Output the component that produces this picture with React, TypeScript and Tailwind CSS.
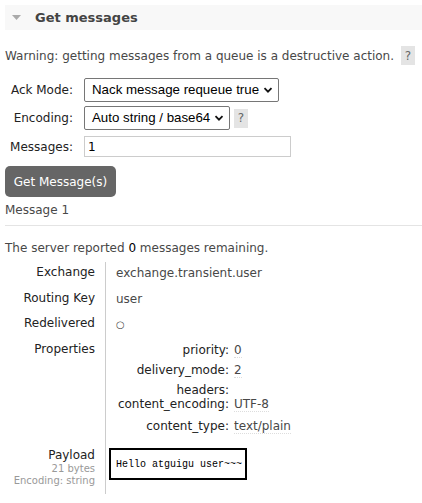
import React from 'react';

const font = { fontFamily: '"DejaVu Sans", Verdana, sans-serif' };

const props: [string, string][] = [
  ['priority:', '0'],
  ['delivery_mode:', '2'],
];

function Help() {
  return (
    <span className="inline-flex items-center justify-center w-[14px] h-[19px] bg-[#e4e4e4] text-[#666] text-[12px]">?</span>
  );
}

function Chevron() {
  return (
    <svg width="10" height="10" viewBox="0 0 10 10" className="absolute right-[5px] top-1/2 -translate-y-1/2 pointer-events-none">
      <path d="M1.5 3.2 L5 6.7 L8.5 3.2" fill="none" stroke="#111" strokeWidth="1.8" />
    </svg>
  );
}

export default function App() {
  return (
    <div className="w-[422px] h-[503px] bg-white text-[12px] text-[#484848] overflow-hidden" style={font}>
      {/* Section header */}
      <div className="mt-[5px] ml-[5px] h-[25px] bg-[#f8f8f8] flex items-center">
        <svg width="10" height="8" viewBox="0 0 10 8" className="ml-[7px]">
          <path d="M0 1 L9 1 L4.5 6 Z" fill="#aaa" />
        </svg>
        <span className="ml-[13px] text-[13px] font-bold text-[#444]">Get messages</span>
      </div>

      <div className="pl-[5px]">
        <div className="mt-[16px] flex items-center h-[19px]">
          <span>Warning: getting messages from a queue is a destructive action.</span>
          <span className="ml-[7px]"><Help /></span>
        </div>

        {/* Form */}
        <div className="mt-[13px] flex flex-col">
          <div className="flex items-center h-[24px]">
            <span className="w-[68px] text-right text-[#222]">Ack Mode:</span>
            <div className="relative ml-[11px] w-[195px] h-[24px] border border-[#767676] rounded-[2px] flex items-center pl-[7px]" style={{ fontFamily: '"Liberation Sans", Arial, sans-serif' }}>
              <span className="text-[13.3px] text-black">Nack message requeue true</span>
              <Chevron />
            </div>
          </div>
          <div className="mt-[4px] flex items-center h-[24px]">
            <span className="w-[68px] text-right text-[#222]">Encoding:</span>
            <div className="relative ml-[11px] w-[146px] h-[24px] border border-[#767676] rounded-[2px] flex items-center pl-[7px]" style={{ fontFamily: '"Liberation Sans", Arial, sans-serif' }}>
              <span className="text-[13.3px] text-black">Auto string / base64</span>
              <Chevron />
            </div>
            <span className="ml-[4px]"><Help /></span>
          </div>
          <div className="mt-[6px] flex items-center h-[21px]">
            <span className="w-[68px] text-right text-[#222]">Messages:</span>
            <div className="ml-[11px] w-[207px] h-[21px] border border-[#ccc] flex items-center pl-[3px] text-[12px] text-black">1</div>
          </div>
        </div>

        <button className="mt-[9px] w-[111px] h-[31px] bg-[#666] rounded-[5px] text-white text-[12px]" style={font}>
          Get Message(s)
        </button>

        <div className="mt-[4px] pb-[6px] border-b border-[#e4e4e4] text-[#484848]">Message 1</div>

        <div className="mt-[13px]">
          The server reported <span className="text-black">0</span> messages remaining.
        </div>

        {/* Facts */}
        <div className="mt-[5px] flex">
          <div className="w-[90px] flex flex-col items-end text-[#222] pt-[1px]">
            <div className="h-[26px]">Exchange</div>
            <div className="h-[25px]">Routing Key</div>
            <div className="h-[26px]">Redelivered</div>
            <div className="h-[108px]">Properties</div>
            <div className="flex flex-col items-end leading-[12px]">
              <span className="text-[12px] text-[#222] leading-[15px]">Payload</span>
              <span className="text-[10px] text-[#999]">21 bytes</span>
              <span className="text-[10px] text-[#999]">Encoding: string</span>
            </div>
          </div>
          <div className="ml-[10px] w-px h-[232px] bg-[#ccc]" />
          <div className="flex flex-col pt-[2px]">
            <div className="ml-[10px] h-[26px]">exchange.transient.user</div>
            <div className="ml-[10px] h-[25px]">user</div>
            <div className="ml-[10px] h-[26px] text-[10px] leading-[20px]">○</div>
            <div className="flex flex-col h-[107px]">
              {props.map(([k, v]) => (
                <div key={k} className="flex h-[20px]">
                  <span className="w-[123px] text-right text-[#222]">{k}</span>
                  <span className="ml-[5px] border-b border-dotted border-[#ddd] h-[17px]">{v}</span>
                </div>
              ))}
              <div className="flex h-[14px]">
                <span className="w-[123px] text-right text-[#222]">headers:</span>
              </div>
              <div className="flex h-[22px]">
                <span className="w-[123px] text-right text-[#222]">content_encoding:</span>
                <span className="ml-[5px] border-b border-dotted border-[#ddd] h-[17px]">UTF-8</span>
              </div>
              <div className="flex">
                <span className="w-[123px] text-right text-[#222]">content_type:</span>
                <span className="ml-[5px] border-b border-dotted border-[#ddd] h-[17px]">text/plain</span>
              </div>
            </div>
            <div className="ml-[3px] w-[138px] h-[32px] border-2 border-black flex items-center pl-[5px] text-black text-[10px]" style={{ fontFamily: '"Liberation Mono", "Courier New", monospace' }}>
              Hello atguigu user~~~
            </div>
          </div>
        </div>
      </div>
    </div>
  );
}
